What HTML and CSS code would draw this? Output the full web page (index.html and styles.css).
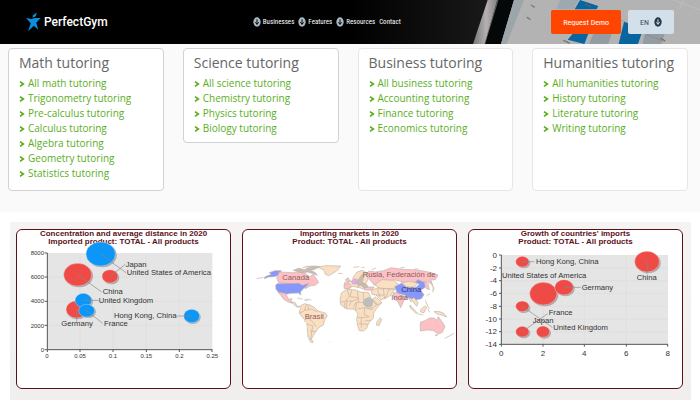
FILE: index.html
```html
<!DOCTYPE html>
<html lang="en">
<head>
<meta charset="utf-8">
<meta name="viewport" content="width=device-width, initial-scale=1">
<title>PerfectGym</title>
<link rel="stylesheet" href="styles.css">
</head>
<body>
<svg class="defs" aria-hidden="true">
  <symbol id="down" viewBox="0 0 24 30"><ellipse cx="12" cy="15" rx="11" ry="14" fill="currentColor"/><path d="M12 7v15M7 16l5 6 5-6" fill="none" stroke="var(--arrow)" stroke-width="3"/></symbol>
  <symbol id="chev" viewBox="0 0 18 18"><path d="M3 2l10 7-10 7" fill="none" stroke="currentColor" stroke-width="5"/></symbol>
</svg>
<header class="top">
  <svg class="photo" viewBox="0 0 1050 132" preserveAspectRatio="none" aria-hidden="true">
    <defs>
      <linearGradient id="lid"><stop offset="0" stop-color="#000"/><stop offset="1" stop-color="#1b1b1b"/></linearGradient>
      <linearGradient id="rim"><stop offset="0" stop-color="#777"/><stop offset=".5" stop-color="#b5b0b2"/><stop offset="1" stop-color="#777"/></linearGradient>
    </defs>
    <path d="M0 0h450v132H0z" fill="url(#lid)"/>
    <path d="M413 0h36l-42 132h-38z" fill="url(#rim)"/>
    <path d="M442 0h60v132h-98z" fill="#050808"/>
    <path d="M444 0l-40 132" stroke="#888" stroke-width="2"/>
    <path d="M492 0h558v132H453z" fill="#b3b3b3"/>
    <path d="M492 0h30l-52 132h-17z" fill="#9ba5aa"/>
    <path d="M630 0h55l-14 27h-51z" fill="#9da9ae"/>
    <path d="M690 0l55 18-5 10h-66z" fill="#0865a0"/>
    <path d="M668 101h47l-12 31-50-13z" fill="#0865a0"/>
    <path d="M730 101h55l-10 31h-58z" fill="#929da3"/>
    <path d="M822 65l58 20-16 47h-58z" fill="#0865a0"/>
    <path d="M884 101h60l-10 31h-56z" fill="#929da3"/>
    <path d="M970 0l80 30M1000 0l-10 26" stroke="#c2c2c2" stroke-width="2"/>
    <path d="M812 60l20 10M890 104l56 22" stroke="#a55" stroke-width="2" stroke-dasharray="3 3"/>
    <path d="M543 15l11 7M531 52l11 7M640 121l20 9M705 12l18 8M932 115l14 8" stroke="#666" stroke-width="4" stroke-dasharray="3 1"/>
  </svg>
  <a class="logo" href="#"><svg viewBox="0 0 44 58" aria-hidden="true"><path d="M20 9L32 1l-4 12-9 3zM0 17l17 3 8-3h18L30 31l6 21-13-12L6 56l8-23z" fill="#0a8fdc"/></svg>PerfectGym</a>
  <nav class="menu">
    <a href="#"><svg><use href="#down"/></svg>Businesses</a>
    <a href="#"><svg><use href="#down"/></svg>Features</a>
    <a href="#"><svg><use href="#down"/></svg>Resources</a>
    <a href="#">Contact</a>
  </nav>
  <div class="actions">
    <button class="demo">Request Demo</button>
    <button class="lang">EN <svg aria-hidden="true"><use href="#down"/></svg></button>
  </div>
</header>
<main>
<section class="subjects">
  <article class="card"><h2>Math tutoring</h2><ul>
    <li><a href="#"><svg><use href="#chev"/></svg>All math tutoring</a></li>
    <li><a href="#"><svg><use href="#chev"/></svg>Trigonometry tutoring</a></li>
    <li><a href="#"><svg><use href="#chev"/></svg>Pre-calculus tutoring</a></li>
    <li><a href="#"><svg><use href="#chev"/></svg>Calculus tutoring</a></li>
    <li><a href="#"><svg><use href="#chev"/></svg>Algebra tutoring</a></li>
    <li><a href="#"><svg><use href="#chev"/></svg>Geometry tutoring</a></li>
    <li><a href="#"><svg><use href="#chev"/></svg>Statistics tutoring</a></li>
  </ul></article>
  <article class="card short"><h2>Science tutoring</h2><ul>
    <li><a href="#"><svg><use href="#chev"/></svg>All science tutoring</a></li>
    <li><a href="#"><svg><use href="#chev"/></svg>Chemistry tutoring</a></li>
    <li><a href="#"><svg><use href="#chev"/></svg>Physics tutoring</a></li>
    <li><a href="#"><svg><use href="#chev"/></svg>Biology tutoring</a></li>
  </ul></article>
  <article class="card soft"><h2>Business tutoring</h2><ul>
    <li><a href="#"><svg><use href="#chev"/></svg>All business tutoring</a></li>
    <li><a href="#"><svg><use href="#chev"/></svg>Accounting tutoring</a></li>
    <li><a href="#"><svg><use href="#chev"/></svg>Finance tutoring</a></li>
    <li><a href="#"><svg><use href="#chev"/></svg>Economics tutoring</a></li>
  </ul></article>
  <article class="card soft"><h2>Humanities tutoring</h2><ul>
    <li><a href="#"><svg><use href="#chev"/></svg>All humanities tutoring</a></li>
    <li><a href="#"><svg><use href="#chev"/></svg>History tutoring</a></li>
    <li><a href="#"><svg><use href="#chev"/></svg>Literature tutoring</a></li>
    <li><a href="#"><svg><use href="#chev"/></svg>Writing tutoring</a></li>
  </ul></article>
</section>
<section class="charts">
  <figure class="chart">
    <figcaption>Concentration and average distance in 2020<br>Imported product: TOTAL - All products</figcaption>
    <svg viewBox="51 123 639 426">
      <path d="M142 144h495v290H142z" fill="#e5e5e5"/>
      <path class="grid" d="M240 144v290M339 144v290M439 144v290M538 144v290M142 216h495M142 289h495M142 361h495"/>
      <path class="axis" d="M142 144v290h495M134 144h8M134 216h8M134 289h8M134 361h8M134 434h8M142 434v7M240 434v7M339 434v7M439 434v7M538 434v7M636 434v7"/>
      <g class="tick small end"><text x="132" y="150">8000</text><text x="132" y="223">6000</text><text x="132" y="295">4000</text><text x="132" y="368">2000</text><text x="132" y="440">0</text></g>
      <g class="tick small mid"><text x="141" y="459">0</text><text x="240" y="459">0.05</text><text x="339" y="459">0.1</text><text x="439" y="459">0.15</text><text x="538" y="459">0.2</text><text x="637" y="459">0.25</text></g>
      <g class="shade"><ellipse cx="306" cy="151" rx="44" ry="36"/><ellipse cx="237" cy="213" rx="42" ry="34"/><ellipse cx="334" cy="218" rx="24" ry="20"/><ellipse cx="232" cy="317" rx="32" ry="26"/><ellipse cx="254" cy="290" rx="25" ry="21"/><ellipse cx="264" cy="320" rx="24" ry="19"/><ellipse cx="578" cy="337" rx="24" ry="20"/></g>
      <g class="bubble"><ellipse class="blue" cx="302" cy="147" rx="44" ry="36"/><ellipse cx="233" cy="209" rx="42" ry="34"/><ellipse cx="330" cy="214" rx="24" ry="20"/><ellipse cx="230" cy="313" rx="32" ry="26"/><ellipse class="blue" cx="250" cy="286" rx="25" ry="21"/><ellipse class="blue" cx="260" cy="317" rx="24" ry="19"/><ellipse class="blue" cx="575" cy="333" rx="24" ry="20"/></g>
      <path class="lead" d="M302 147l76 56M330 214l46-36M233 209l72 52M250 286h46M230 313v36M260 317l48 38M575 333h-46"/>
      <g class="name"><text x="377" y="185">Japan</text><text x="380" y="210">United States of America</text><text x="308" y="268">China</text><text x="296" y="293">United Kingdom</text><text x="342" y="340">Hong Kong, China</text><text x="184" y="363">Germany</text><text x="312" y="362">France</text></g>
    </svg>
  </figure>
  <figure class="chart">
    <figcaption>Importing markets in 2020<br>Product: TOTAL - All products</figcaption>
    <svg viewBox="39 123 639 426">
      <g class="land">
        <path class="us" d="M104 216l20-8-6-5 16-6 20 0-8 14-14 4-18 1-10 5z"/>
        <path class="pink" d="M148 201l40 2 22-3 18 6 10 10 12-8 8 12 8 12-10 8-16 3-14 8-12-12-68-6-6-14z"/>
        <path class="rock" d="M190 196l16-6 18 4 10-6 22-5 14 2-16 8-14 4 14 4 8 10-16-6-14-4-16 3zM218 188l14-4 20-1"/>
        <path d="M262 187l26-5 44 1-8 11-10 8-18 10-10-4-4-12-12-7z"/>
        <path class="us" d="M141 236l66-1 10 6 20-6-8 9-10 8-8 10 2 8-8-6-24 1-14 3-20-5-9-10-1-12z"/>
        <path class="pink" d="M144 262l22 3 6 10 4 8 10-2-4 8 8 6-14-3-16-10-8-12z"/>
        <path d="M184 290l12 3 4 10 10 2-8 2-10-8zM202 279l16 4M222 285l12 3"/>
        <path d="M212 302l12-6 16 4 14 8 10 10 22 6 6 8-8 12-4 16-14 8-10 14-6 10-6 10 6 10-8 0-8-16-2-24-2-22-14-14-8-14 4-12z"/>
        <path d="M206 326l16-8 8-20M224 316l20-4 18 8M222 350l10-12 16 12 10 14M230 358l18 4-6 42M240 378l18 2M236 302l-2 14"/>
        <path d="M334 264l16-11 28 2 12 6 26 2 8 18 12 16 18-3-14 16-9 14-1 16-14 14-6 16-10 8-12-1-6-18-2-20 4-12-10-14-26-2-16-12-2-14z"/>
        <path d="M352 255l6 20-12 12M366 253l-6 22 26 3M382 258l4 34M346 288l24 0 16-8M358 302l6-14M370 308l8-16 22 0M380 294l-4 22M400 262v22M332 290h18v20M344 294v16M382 312l22-4 24 6M404 308l-2 20 18 8M384 338l30-2M394 338l0 30M404 348l18-2M386 356l28 2M414 310l16-2 12-10M426 282l14 18"/>
        <path class="sudan" d="M402 284l14-7 12 8-2 18-16 4-10-10z"/>
        <path d="M441 350l10-12 4 6-8 18-8-2z"/>
        <path d="M368 220l12-18 16-6 16 8 2 20-8 12-14 4-14-6zM344 232l16-4 14 4 24 10 10 12-20-6-20-4-12 8-12-4z"/>
        <path class="pink" d="M342 238l14-4 8 8-10 10-12-2zM346 224l8-6 6 10-8 3zM366 230l10-6 8 6-8 8zM402 246h30l-6 10-22-1z"/>
        <path class="mag" d="M364 228l8-7 12 4-4 10-12 2z"/>
        <path class="rock" d="M382 230l8-14 8-10 4 10-6 16 14 6 4 8-12 2-10-8-8 4z"/>
        <path class="pink" d="M406 208l12-10 18 3 24-4 24-9 32 5 44 2 32 5 32 10-8 14-14 1 6 16-14-10-16 0-32 5-26-5-26-6-28 3-14 16-20-4-14-18z"/>
        <path d="M436 238l20-14 34 2 14 10-8 16-30-2-18 2zM424 256l20-8 30 4 20 0-10 18-18 10-14 4-14-14-12-2zM442 252l8 24M460 252l4 30M438 270l24 0M478 252l-12 28M436 276l20 16-12 8-16-18z"/>
        <path class="us" d="M494 245l20-10 20 12 24 0 10-9-12-7 8-7 24 10-4 14-12 8 10 13-8 12-18 4-18-4-16-12-20-4z"/>
        <path d="M514 233l24-4 24 5-8 12-24 0z"/>
        <path class="pink" d="M490 264l12-2 14 12 18 2-12 10-10 22-8-18-12-8zM582 230l6 20 10 4-4-18z"/>
        <path d="M536 276l8 6 8-4 12 14-4 12-12-16-6 2zM540 300l18 20 4 4-4 1-18-17zM572 314l12-11 6 4-8 16-10-2zM562 326l18 4M594 310l4 12M586 286l6 16 6 8M612 320l14-1 14 5 10 12-16-6-12-3z"/>
        <path class="pink" d="M571 352l14-5 14-8 14 0 6 8 6-12 10 14 10 15-8 18-12 5-16-11-18-1-20 3zM616 391l5-3v5z"/>
        <path d="M644 400l14-7 14-8M370 187l18-2M394 188l10-1M426 194l12-5M510 189l14-2M552 192l14 0M80 221l20-4M324 205l14 1M602 228l10 22 -4 12M600 266l-10 6M60 283l2 2M226 282l18 3M474 404l2 1M298 411l2 1"/>
      </g>
      <g class="name place"><text x="157" y="224">Canadá</text><text x="398" y="217">Rusia, Federación de</text><text class="dark" x="514" y="260">China</text><text x="484" y="284">India</text><text x="224" y="343">Brasil</text></g>
    </svg>
  </figure>
  <figure class="chart">
    <figcaption>Growth of countries' imports<br>Product: TOTAL - All products</figcaption>
    <svg viewBox="27 123 639 426">
      <path d="M124 150h500v268H124z" fill="#e5e5e5"/>
      <path class="grid" d="M249 150v268M373 150v268M499 150v268M124 189h500M124 227h500M124 265h500M124 304h500M124 342h500M124 380h500"/>
      <path class="axis" d="M124 150v268h500M117 150h7M117 189h7M117 227h7M117 265h7M117 304h7M117 342h7M117 380h7M117 418h7M124 418v7M249 418v7M373 418v7M499 418v7M623 418v7"/>
      <g class="tick end"><text x="111" y="158">0</text><text x="111" y="197">-2</text><text x="111" y="235">-4</text><text x="111" y="273">-6</text><text x="111" y="312">-8</text><text x="111" y="350">-10</text><text x="111" y="388">-12</text><text x="111" y="426">-14</text></g>
      <g class="tick mid"><text x="124" y="453">0</text><text x="249" y="453">2</text><text x="373" y="453">4</text><text x="499" y="453">6</text><text x="623" y="453">8</text></g>
      <g class="shade"><ellipse cx="191" cy="174" rx="20" ry="16"/><ellipse cx="565" cy="174" rx="37" ry="31"/><ellipse cx="254" cy="270" rx="41" ry="34"/><ellipse cx="316" cy="251" rx="28" ry="23"/><ellipse cx="191" cy="308" rx="20" ry="16"/><ellipse cx="191" cy="384" rx="20" ry="16"/><ellipse cx="253" cy="384" rx="20" ry="17"/></g>
      <g class="bubble"><ellipse cx="187" cy="170" rx="20" ry="16"/><ellipse cx="561" cy="170" rx="37" ry="31"/><ellipse cx="250" cy="266" rx="41" ry="34"/><ellipse cx="312" cy="247" rx="28" ry="23"/><ellipse cx="187" cy="304" rx="20" ry="16"/><ellipse cx="187" cy="380" rx="20" ry="16"/><ellipse cx="249" cy="380" rx="20" ry="17"/></g>
      <path class="lead" d="M187 170h36M561 170v38M312 247h50M187 304l90 63M187 380l76-54"/>
      <g class="name"><text x="228" y="178">Hong Kong, China</text><text x="126" y="220">United States of America</text><text x="530" y="225">China</text><text x="365" y="254">Germany</text><text x="266" y="331">France</text><text x="218" y="354">Japan</text><text x="280" y="375">United Kingdom</text></g>
    </svg>
  </figure>
</section>
</main>
</body>
</html>
```
FILE: styles.css
```css
* { box-sizing: border-box; }
body { margin: 0; background: #fff; font-family: "Open Sans", sans-serif; }
a { color: inherit; text-decoration: none; }
.defs { display: none; }

.top {
  position: relative;
  display: flex;
  align-items: center;
  height: 44px;
  padding: 0 26px;
  background: #000;
  color: #fff;
  font-family: "Roboto Condensed", Roboto, sans-serif;
}
.photo { position: absolute; top: 0; right: 0; width: 50%; height: 100%; }
.logo, .menu, .actions { position: relative; display: flex; align-items: center; }
.logo { flex: 0 0 35%; gap: 3px; font: 500 12px Roboto, sans-serif; }
.logo svg { width: 15px; height: 20px; }
.menu { gap: 4px; font-size: 7px; }
.menu a { display: flex; align-items: center; gap: 2px; }
.menu svg { width: 8px; height: 10px; color: #a9bac4; --arrow: #000; }
.actions { flex: 1; justify-content: flex-end; gap: 7px; }
.actions button { height: 24px; border: 0; border-radius: 2px; font: 8px "Roboto Condensed", Roboto, sans-serif; }
.demo { padding: 0 12px; background: #ff4600; color: #fff; }
.lang { display: flex; align-items: center; gap: 5px; padding: 0 12px; background: #d3e0ea; color: #34495c; }
.lang svg { width: 8px; height: 10px; color: #24394c; --arrow: #d3e0ea; }

.subjects {
  display: grid;
  grid-template-columns: repeat(4, 1fr);
  gap: 19px;
  padding: 4px 12px 21px 8px;
  background: #fafafa;
}
.card { padding: 5px 10px 9px; border: 1px solid #d2d2d2; border-radius: 4px; background: #fff; }
.short { align-self: start; padding-bottom: 6px; }
.soft { border-color: #e6e6e6; }
.card h2 { margin: 0 0 4px; font-size: 14px; font-weight: 400; line-height: 18px; color: #666; white-space: nowrap; }
.card ul { margin: 0; padding: 0; list-style: none; }
.card li { font-size: 10px; line-height: 15px; color: #5aae1e; white-space: nowrap; }
.card li a { display: flex; align-items: center; gap: 3px; }
.card li svg { width: 6px; height: 6px; }

.charts {
  display: grid;
  grid-template-columns: repeat(3, 1fr);
  gap: 11px;
  margin: 10px 9px 0 10px;
  padding: 7px 8px 11px 6px;
  background: linear-gradient(#f5f4f3, #f0efed);
}
.chart { margin: 0; border: 1px solid #5c1019; border-radius: 6px; background: #fff; }
.chart figcaption { font: bold 8px/8px "Liberation Sans", sans-serif; color: #5c1019; text-align: center; }
.chart svg { display: block; width: 100%; overflow: visible; }
.grid { stroke: #dcdcdc; stroke-width: 2; }
.axis { fill: none; stroke: #555; stroke-width: 3; }
.tick, .name { font-family: "Liberation Sans", sans-serif; fill: #333; }
.tick { font-size: 24px; }
.small { font-size: 18px; }
.name { font-size: 23px; }
.end { text-anchor: end; }
.mid { text-anchor: middle; }
.shade { fill: #aaa; }
.bubble { fill: #ee4b47; stroke: #f4efef; stroke-width: 1; }
.bubble .blue { fill: #0c96f8; }
.lead { fill: none; stroke: #888; stroke-width: 2; }
.land { fill: #fbdfc0; stroke: #bdb3aa; stroke-width: 2; }
.land .pink { fill: #fdc0c5; }
.land .us { fill: #8797fb; }
.land .mag { fill: #e4aaf0; }
.land .rock { fill: #c9bbb4; }
.land .sudan { fill: #bdbdbd; }
.place { fill: #8b6058; }
.place .dark { fill: #30356b; }
```
